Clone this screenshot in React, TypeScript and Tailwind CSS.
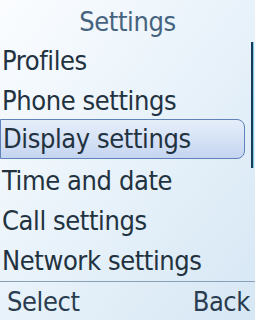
import React from "react";

const items = [
  "Profiles",
  "Phone settings",
  "Display settings",
  "Time and date",
  "Call settings",
  "Network settings",
];

export default function App() {
  const selected = 2;
  return (
    <div
      className="relative w-[255px] h-[320px] overflow-hidden flex flex-col bg-gradient-to-br from-[#fbfdff] via-[#e8f2fa] to-[#d6e7f4] text-[#22323f] tracking-[-0.4px]"
      style={{ fontFamily: '"DejaVu Sans Condensed", "DejaVu Sans", sans-serif' }}
    >
      {/* Title */}
      <div className="h-[40px] flex items-center justify-center text-[27px] text-[#46637f] leading-none pt-[2px]">
        Settings
      </div>

      {/* List */}
      <div className="flex flex-col">
        {items.map((label, i) => (
          <div key={label} className="h-[40px] flex items-center">
            {i === selected ? (
              <div className="h-[40px] w-[245px] -mt-[3px] flex items-center pl-[2px] rounded-r-[8px] border border-[#5f82b9] bg-gradient-to-b from-[#e6eefa] via-[#d6e2f6] to-[#c5d5f0] text-[27px] leading-none">
                {label}
              </div>
            ) : (
              <div className="pl-[2px] text-[27px] leading-none">{label}</div>
            )}
          </div>
        ))}
      </div>

      {/* Separator */}
      <div className="mt-auto h-px bg-[#8aa0b6]" />

      {/* Soft keys */}
      <div className="h-[38px] flex items-center justify-between pl-[7px] pr-[5px] text-[27px] leading-none text-[#2a3d50]">
        <span>Select</span>
        <span>Back</span>
      </div>

      {/* Scrollbar */}
      <div className="absolute right-[2px] top-[42px] h-[126px] w-[2px] bg-[#1b3b5a]" />
      <div className="absolute right-[1px] top-[42px] h-[126px] w-px bg-[#7fd0e0]" />
    </div>
  );
}
